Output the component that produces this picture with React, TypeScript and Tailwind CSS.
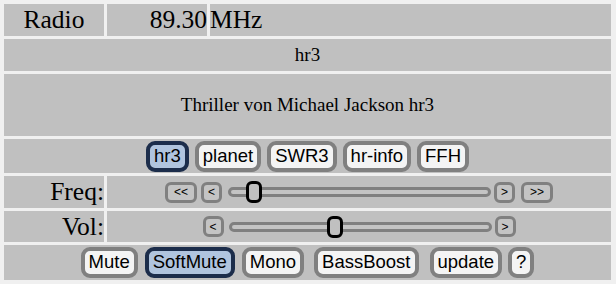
import React from 'react';

const serif = { fontFamily: '"Liberation Serif", "Times New Roman", serif' };
const sans = { fontFamily: '"Liberation Sans", Arial, sans-serif' };

interface BigButtonProps {
  label: string;
  active?: boolean;
  className?: string;
}

const BigButton: React.FC<BigButtonProps> = ({ label, active = false, className = '' }) => (
  <button
    style={sans}
    className={`h-[31px] px-[4px] rounded-[9px] border-[4px] text-[18.5px] leading-none text-black ${
      active ? 'bg-[#b0c4de] border-[#1c2d4b]' : 'bg-[#f4f4f4] border-[#808080]'
    } ${className}`}
  >
    {label}
  </button>
);

const SmallButton: React.FC<{ label: string; w: string }> = ({ label, w }) => (
  <button
    style={sans}
    className={`${w} h-[21px] rounded-[6px] border-[3px] border-[#808080] bg-[#c4c4c4] text-[12px] leading-none text-black flex items-center justify-center`}
  >
    {label}
  </button>
);

const Slider: React.FC<{ pos: number }> = ({ pos }) => (
  <div className="relative w-[263px] h-[24px] flex items-center">
    <div className="w-full h-[10px] rounded-full border-[3px] border-[#808080] bg-[#c4c4c4]" />
    <div
      className="absolute top-[1px] w-[16px] h-[22px] rounded-[6px] border-[3px] border-black bg-[#c0c0c0]"
      style={{ left: pos }}
    />
  </div>
);

export default function App() {
  return (
    <div className="w-[616px] h-[284px] bg-[#f0f0f0] pt-[4px] pl-[4px] pr-[5px] flex flex-col gap-[3px] overflow-hidden">
      {/* frequency display */}
      <div className="flex gap-[3px] h-[32px]">
        <div style={serif} className="w-[100px] bg-[#c0c0c0] text-[25.5px] text-center leading-[32px]">Radio</div>
        <div style={serif} className="w-[100px] bg-[#c0c0c0] text-[25.5px] text-right leading-[32px]">89.30</div>
        <div style={serif} className="flex-1 bg-[#c0c0c0] text-[25.5px] leading-[32px]">MHz</div>
      </div>
      <div style={serif} className="h-[32px] bg-[#c0c0c0] text-[19px] flex items-center justify-center">hr3</div>
      <div style={serif} className="h-[62px] bg-[#c0c0c0] text-[19px] flex items-center justify-center">
        Thriller von Michael Jackson hr3
      </div>

      {/* stations */}
      <div className="h-[34px] bg-[#c0c0c0] flex items-center justify-center gap-[6px]">
        <BigButton label="hr3" active />
        <BigButton label="planet" />
        <BigButton label="SWR3" />
        <BigButton label="hr-info" />
        <BigButton label="FFH" />
      </div>

      {/* freq */}
      <div className="flex gap-[3px] h-[32px]">
        <div style={serif} className="w-[100px] bg-[#c0c0c0] text-[25.5px] text-right leading-[32px]">Freq:</div>
        <div className="flex-1 bg-[#c0c0c0] flex items-center justify-center">
          <SmallButton label="<<" w="w-[32px]" />
          <div className="ml-[4px]"><SmallButton label="<" w="w-[21px]" /></div>
          <div className="ml-[6px]"><Slider pos={18} /></div>
          <div className="ml-[3px]"><SmallButton label=">" w="w-[21px]" /></div>
          <div className="ml-[6px]"><SmallButton label=">>" w="w-[32px]" /></div>
        </div>
      </div>

      {/* vol */}
      <div className="flex gap-[3px] h-[31px]">
        <div style={serif} className="w-[100px] bg-[#c0c0c0] text-[25.5px] text-right leading-[31px]">Vol:</div>
        <div className="flex-1 bg-[#c0c0c0] flex items-center justify-center">
          <SmallButton label="<" w="w-[21px]" />
          <div className="ml-[5px]"><Slider pos={98} /></div>
          <div className="ml-[3px]"><SmallButton label=">" w="w-[21px]" /></div>
        </div>
      </div>

      {/* options */}
      <div className="h-[35px] bg-[#c0c0c0] flex items-center justify-center">
        <BigButton label="Mute" />
        <BigButton label="SoftMute" active className="ml-[7px]" />
        <BigButton label="Mono" className="ml-[7px]" />
        <BigButton label="BassBoost" className="ml-[10px]" />
        <BigButton label="update" className="ml-[11px]" />
        <BigButton label="?" className="ml-[6px]" />
      </div>
    </div>
  );
}
